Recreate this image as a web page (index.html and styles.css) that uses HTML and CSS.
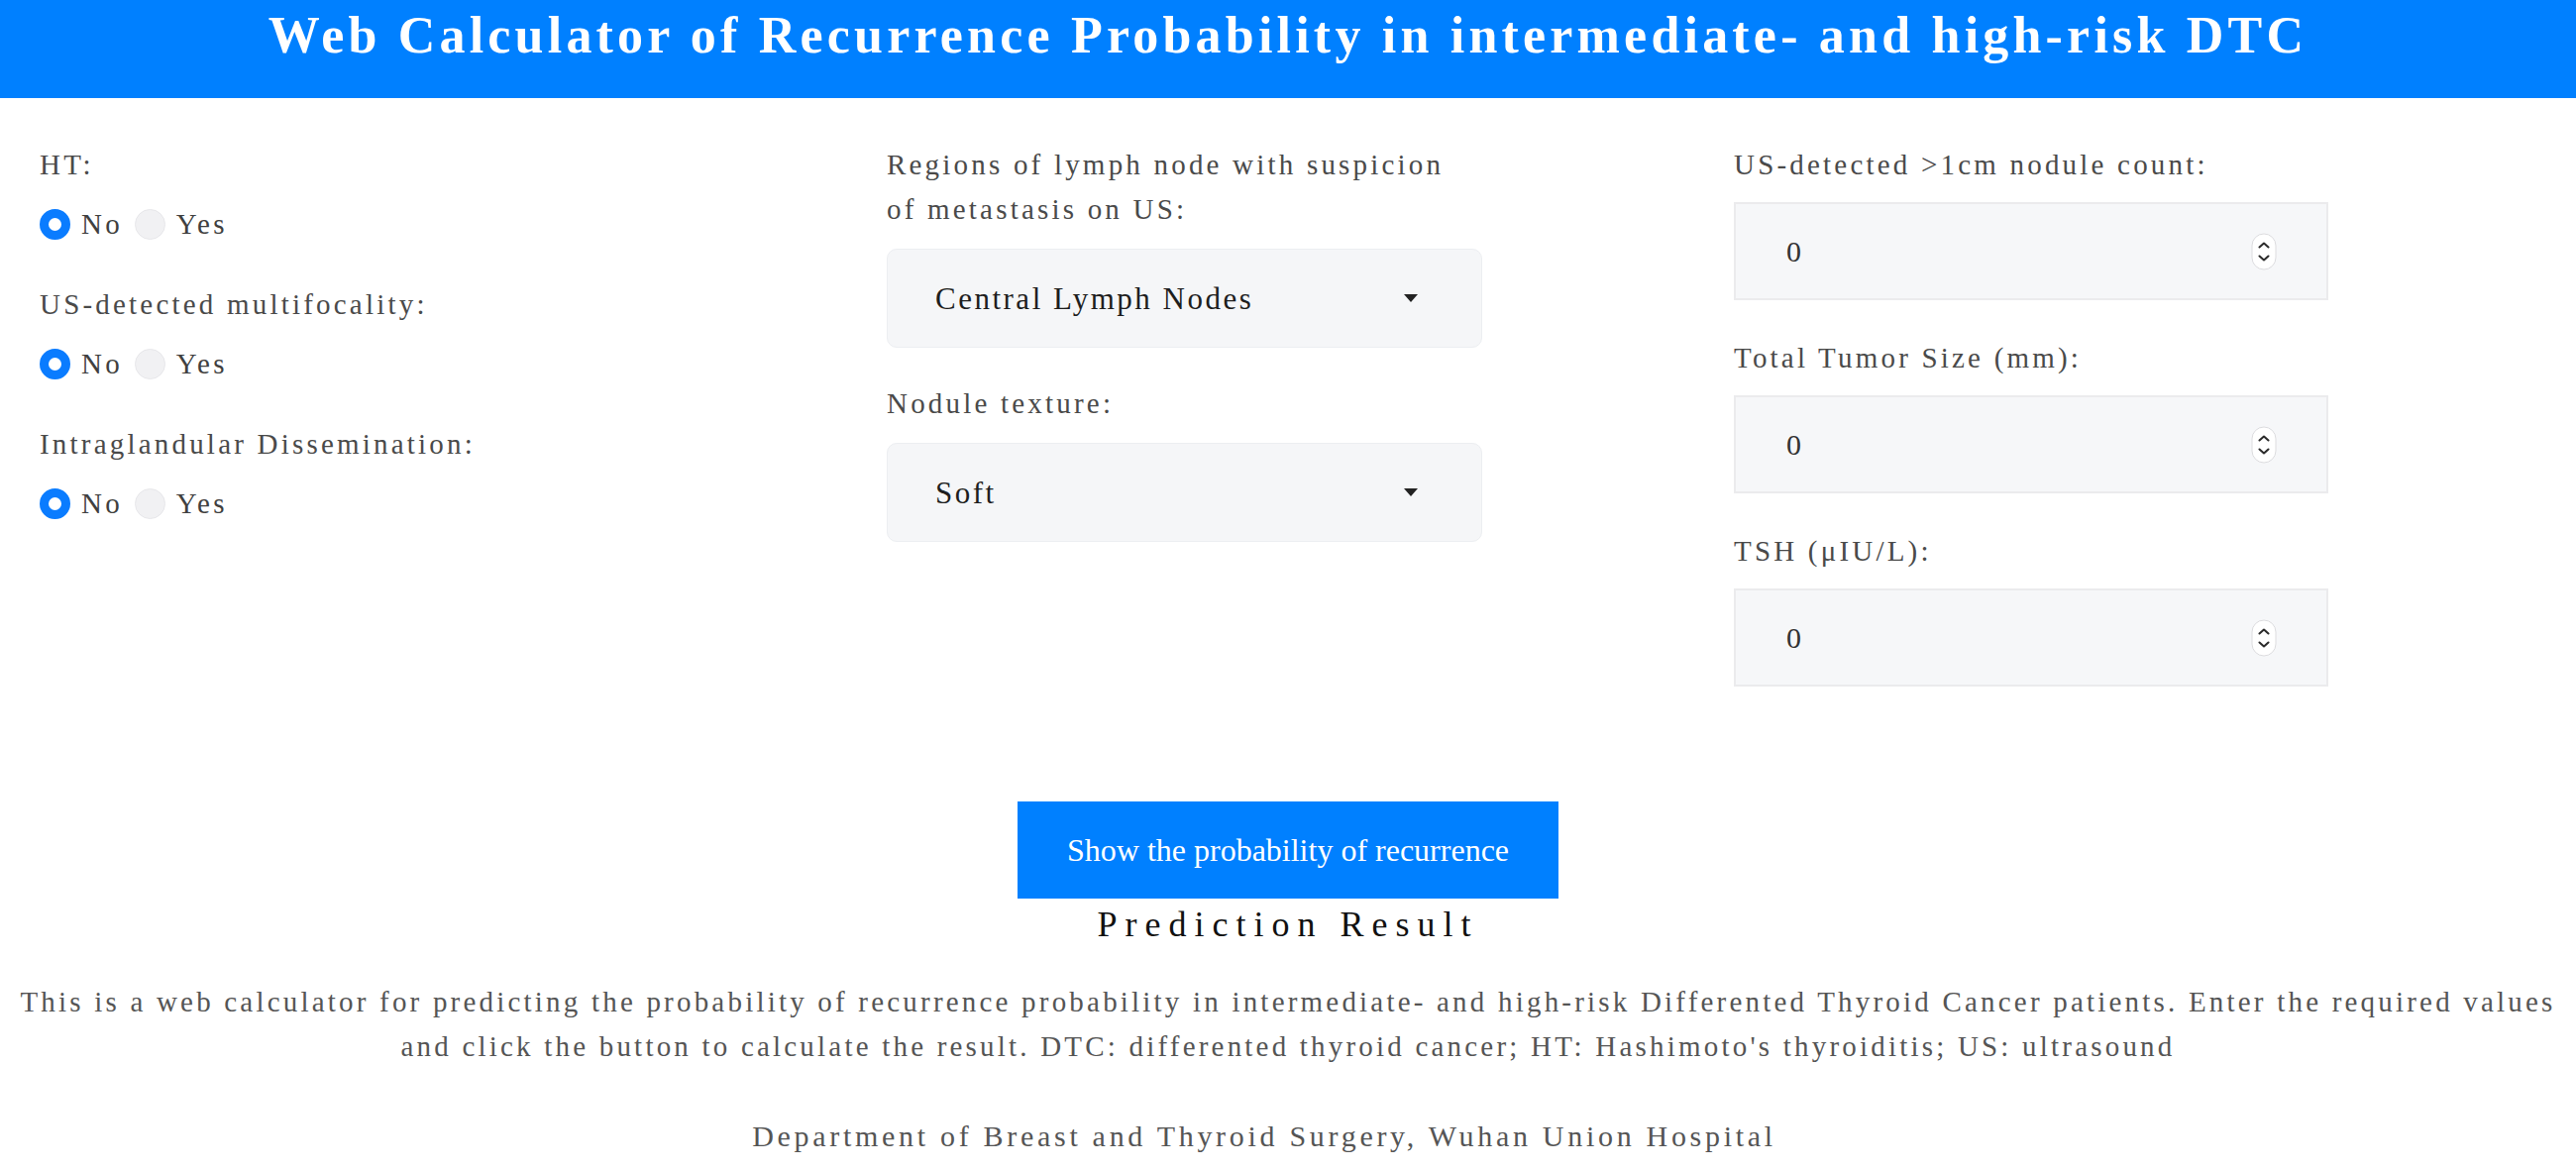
FILE: index.html
```html
<!DOCTYPE html>
<html lang="en">
<head>
    <meta charset="UTF-8">
    <meta name="viewport" content="width=device-width, initial-scale=1.0">
    <title>Web Calculator of Recurrence Probability</title>
    <link rel="stylesheet" href="styles.css">
</head>
<body>

    <header class="header">
        <h1 class="title">Web Calculator of Recurrence Probability in intermediate- and high-risk DTC</h1>
    </header>

    <div class="form-grid">
        <!-- Left column: yes/no questions -->
        <div class="column">
            <div class="field">
                <div class="field-label">HT:</div>
                <div class="radio-row">
                    <label class="radio-option"><input type="radio" name="ht" value="0" checked><span>No</span></label>
                    <label class="radio-option"><input type="radio" name="ht" value="1"><span>Yes</span></label>
                </div>
            </div>
            <div class="field">
                <div class="field-label">US-detected multifocality:</div>
                <div class="radio-row">
                    <label class="radio-option"><input type="radio" name="multifocal" value="0" checked><span>No</span></label>
                    <label class="radio-option"><input type="radio" name="multifocal" value="1"><span>Yes</span></label>
                </div>
            </div>
            <div class="field">
                <div class="field-label">Intraglandular Dissemination:</div>
                <div class="radio-row">
                    <label class="radio-option"><input type="radio" name="dissemination" value="0" checked><span>No</span></label>
                    <label class="radio-option"><input type="radio" name="dissemination" value="1"><span>Yes</span></label>
                </div>
            </div>
        </div>

        <!-- Middle column: dropdowns -->
        <div class="column">
            <div class="field field-select">
                <div class="field-label">Regions of lymph node with suspicion<br>of metastasis on US:</div>
                <div class="select-wrap">
                    <select class="select" id="lymph">
                        <option>Central Lymph Nodes</option>
                        <option>Lateral Lymph Nodes</option>
                        <option>Both</option>
                    </select>
                    <svg class="select-arrow" width="14" height="8" viewBox="0 0 14 8"><path d="M0 0h14L7 8z" fill="#222"/></svg>
                </div>
            </div>
            <div class="field field-select">
                <div class="field-label">Nodule texture:</div>
                <div class="select-wrap">
                    <select class="select" id="texture">
                        <option>Soft</option>
                        <option>Hard</option>
                    </select>
                    <svg class="select-arrow" width="14" height="8" viewBox="0 0 14 8"><path d="M0 0h14L7 8z" fill="#222"/></svg>
                </div>
            </div>
        </div>

        <!-- Right column: numeric inputs -->
        <div class="column">
            <div class="field">
                <div class="field-label">US-detected &gt;1cm nodule count:</div>
                <div class="number-wrap">
                    <input class="number" type="number" id="count" value="0">
                    <svg class="spinner" width="26" height="38" viewBox="0 0 26 38">
                        <rect x="1" y="1" width="24" height="36" rx="12" fill="#fff" stroke="#dcdcdf"/>
                        <path d="M8.5 14.5l4.5-4 4.5 4M8.5 23.5l4.5 4 4.5-4" fill="none" stroke="#2b2b2b" stroke-width="2" stroke-linecap="round" stroke-linejoin="round"/>
                    </svg>
                </div>
            </div>
            <div class="field">
                <div class="field-label">Total Tumor Size (mm):</div>
                <div class="number-wrap">
                    <input class="number" type="number" id="size" value="0">
                    <svg class="spinner" width="26" height="38" viewBox="0 0 26 38">
                        <rect x="1" y="1" width="24" height="36" rx="12" fill="#fff" stroke="#dcdcdf"/>
                        <path d="M8.5 14.5l4.5-4 4.5 4M8.5 23.5l4.5 4 4.5-4" fill="none" stroke="#2b2b2b" stroke-width="2" stroke-linecap="round" stroke-linejoin="round"/>
                    </svg>
                </div>
            </div>
            <div class="field">
                <div class="field-label">TSH (μIU/L):</div>
                <div class="number-wrap">
                    <input class="number" type="number" id="tsh" value="0">
                    <svg class="spinner" width="26" height="38" viewBox="0 0 26 38">
                        <rect x="1" y="1" width="24" height="36" rx="12" fill="#fff" stroke="#dcdcdf"/>
                        <path d="M8.5 14.5l4.5-4 4.5 4M8.5 23.5l4.5 4 4.5-4" fill="none" stroke="#2b2b2b" stroke-width="2" stroke-linecap="round" stroke-linejoin="round"/>
                    </svg>
                </div>
            </div>
        </div>
    </div>

    <div class="actions">
        <button class="button" id="predict">Show the probability of recurrence</button>
        <div class="result-title">Prediction Result</div>
        <div class="result" id="result"></div>
    </div>

    <p class="description">This is a web calculator for predicting the probability of recurrence probability in intermediate- and high-risk Differented Thyroid Cancer patients. Enter the required values and click the button to calculate the result. DTC: differented thyroid cancer; HT: Hashimoto's thyroiditis; US: ultrasound</p>

    <p class="footer">Department of Breast and Thyroid Surgery, Wuhan Union Hospital</p>

</body>
</html>
```

FILE: styles.css
```css
body {
    font-family: "Liberation Serif", "Times New Roman", serif;
    margin: 0;
    background-color: #fff;
    color: #444;
}

.header {
    background-color: #0080ff;
    height: 99px;
    box-sizing: border-box;
}

.title {
    margin: 0;
    color: #fff;
    font-size: 52px;
    line-height: 72px;
    letter-spacing: 4.2px;
    text-align: center;
}

.form-grid {
    display: grid;
    grid-template-columns: repeat(3, 855px);
    padding: 45px 0 0 40px;
}

.field {
    margin-bottom: 36px;
}

.field-label {
    font-size: 29px;
    line-height: 45px;
    letter-spacing: 3.2px;
    color: #4a4a4a;
    margin-bottom: 15px;
}

.field-select {
    margin-bottom: 34px;
}

.field-select .field-label {
    margin-bottom: 17px;
}

/* radio buttons */
.radio-row {
    display: flex;
    align-items: center;
    height: 45px;
}

.radio-option {
    display: flex;
    align-items: center;
    margin-right: 12px;
    font-size: 29px;
    letter-spacing: 3.2px;
    color: #404040;
    cursor: pointer;
}

.radio-option input {
    appearance: none;
    -webkit-appearance: none;
    width: 31px;
    height: 31px;
    margin: 0 11px 0 0;
    border-radius: 50%;
    background-color: #f1f1f3;
    border: 1px solid #e7e7ea;
    box-sizing: border-box;
}

.radio-option input:checked {
    background-color: #fff;
    border: 9px solid #0a7cff;
}

/* dropdowns */
.select-wrap {
    position: relative;
    width: 601px;
}

.select {
    appearance: none;
    -webkit-appearance: none;
    width: 100%;
    height: 100px;
    padding: 0 0 0 48px;
    font-family: inherit;
    font-size: 31px;
    letter-spacing: 2.5px;
    color: #1e1e1e;
    background-color: #f5f6f8;
    border: 1px solid #eceef1;
    border-radius: 10px;
    outline: none;
}

.select-arrow {
    position: absolute;
    right: 65px;
    top: 46px;
    pointer-events: none;
}

/* number inputs */
.number-wrap {
    position: relative;
    width: 600px;
}

.number {
    width: 100%;
    height: 99px;
    box-sizing: border-box;
    padding: 0 0 0 51px;
    font-family: inherit;
    font-size: 30px;
    color: #333;
    background-color: #f6f7f9;
    border: 2px solid #ebebed;
    border-radius: 0;
    outline: none;
}

.number::-webkit-inner-spin-button,
.number::-webkit-outer-spin-button {
    -webkit-appearance: none;
    margin: 0;
}

.spinner {
    position: absolute;
    right: 52px;
    top: 31px;
    pointer-events: none;
}

/* button and result */
.actions {
    display: flex;
    flex-direction: column;
    align-items: center;
    margin-top: 80px;
}

.button {
    width: 546px;
    height: 98px;
    font-family: inherit;
    font-size: 32px;
    color: #fff;
    background-color: #0080ff;
    border: none;
    border-radius: 0;
    cursor: pointer;
}

.button:hover {
    background-color: #0070e0;
}

.result-title {
    font-size: 36px;
    line-height: 45px;
    letter-spacing: 8px;
    color: #111;
    margin-top: 4px;
}

.description {
    margin: 33px 0 0;
    padding: 0 10px;
    font-size: 29px;
    line-height: 45px;
    letter-spacing: 3.2px;
    color: #555;
    text-align: center;
}

.footer {
    margin: 45px 0 0;
    padding-right: 48px;
    font-size: 30px;
    line-height: 45px;
    letter-spacing: 3.7px;
    color: #555;
    text-align: center;
}
```
